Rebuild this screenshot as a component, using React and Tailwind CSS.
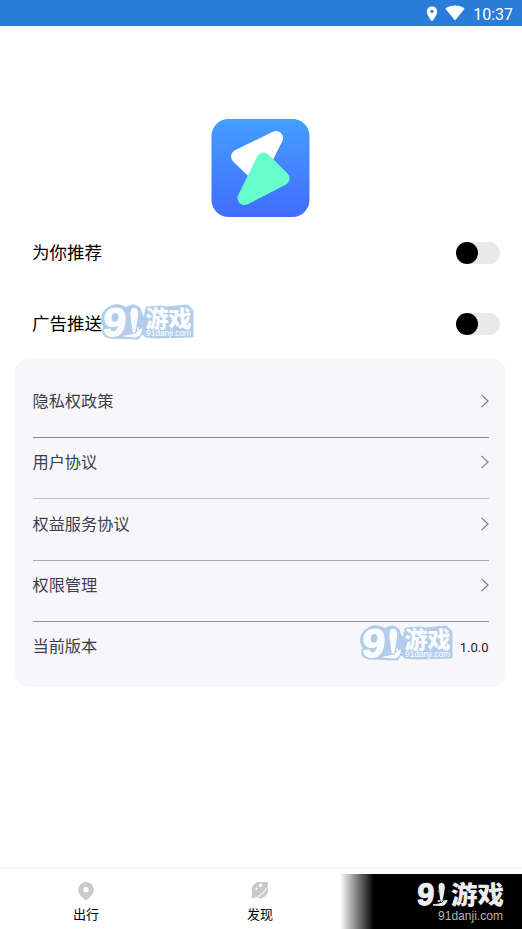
const switches = [
    { id: 'recommend', label: '为你推荐' },
    { id: 'ads', label: '广告推送', marked: true }
];

const links = [
    { label: '隐私权政策', line: 'border-[#85868f]' },
    { label: '用户协议', line: 'border-[#c3c3c9]' },
    { label: '权益服务协议', line: 'border-[#a7a7ae]' },
    { label: '权限管理', line: 'border-[#8f8f98]' }
];

function StatusBar() {
    return (
        <div className="flex h-[26px] shrink-0 items-center justify-end bg-[#2b7bd9] pr-[9px] text-white">
            <svg width="12" height="16" viewBox="0 0 11 16" className="mr-[7px] mt-px">
                <path
                    fill="currentColor"
                    fillRule="evenodd"
                    d="M5.500.2a5.200 5.200 0 0 0-5.200 5.200c0 3.700 5.200 10.100 5.200 10.100s5.200-6.400 5.200-10.100A5.200 5.200 0 0 0 5.500.2zm0 3.600a1.600 1.600 0 1 1 0 3.200 1.600 1.600 0 0 1 0-3.200z"
                />
            </svg>
            <svg width="20" height="16" viewBox="0 0 20 16" className="mr-[8px]">
                <path fill="currentColor" d="M10 15.500L.4 3.700C3 1.600 6.300.5 10 .5s7 1.100 9.600 3.200z" />
            </svg>
            <span className="mt-[3px] font-[Roboto,sans-serif] text-base leading-6">10:37</span>
        </div>
    );
}

function AppLogo() {
    return (
        <svg width="99" height="98" viewBox="0 0 99 98">
            <defs>
                <linearGradient id="logoBg" x1="0" y1="0" x2="0" y2="1">
                    <stop offset="0" stopColor="#439fff" />
                    <stop offset="1" stopColor="#426cff" />
                </linearGradient>
            </defs>
            <rect x=".5" width="98" height="98" rx="17" fill="url(#logoBg)" />
            <path
                d="M27 37.500L65 19L48 53L43 53z"
                fill="#fff"
                stroke="#fff"
                strokeWidth="14"
                strokeLinejoin="round"
            />
            <path
                d="M52.500 40.500L71.500 59.500L33.500 79z"
                fill="#66ffcb"
                stroke="#66ffcb"
                strokeWidth="14"
                strokeLinejoin="round"
            />
        </svg>
    );
}

// Sticker version of the site mark, white on a pale blue outline
function SiteSticker({ className }) {
    return (
        <svg width="97" height="38" viewBox="0 0 97 38" overflow="visible" className={className}>
            <path
                d="M15 3Q22 2 27 6Q35 0 40 6L43 14L46 14L48 5L62 4L68 5L88 3L93 8L93 33L58 34L47 33L43 29L39 35L11 34Q2 32 6 24Q-2 10 15 3z"
                fill="#b2cdea"
                stroke="#b2cdea"
                strokeWidth="3"
                strokeLinejoin="round"
            />
            <g
                fill="#fafcff"
                stroke="#fafcff"
                strokeLinejoin="round"
                fontFamily="'Liberation Sans', 'Noto Sans CJK SC', sans-serif"
                fontWeight="bold"
            >
                <text transform="translate(3 33) skewX(-5)" fontSize="40" strokeWidth="1.200" textLength="23" lengthAdjust="spacingAndGlyphs">9</text>
                <path d="M25 33Q34 33 42.500 26Q42 34 35 34z" strokeWidth="1.200" />
                <text x="31" y="27" fontSize="26" stroke="none" textLength="9" lengthAdjust="spacingAndGlyphs">1</text>
                <path d="M35 4Q41 4 39.500 14L37 29Q35 32 33 29L31 14Q30 4 35 4z" stroke="#b2cdea" strokeWidth="1.300" />
                <text x="46.500" y="24" fontSize="23" fontWeight="900" stroke="none" textLength="46" lengthAdjust="spacingAndGlyphs">游戏</text>
                <text x="47" y="33" fontSize="9.500" fontWeight="normal" strokeWidth=".1" textLength="45" lengthAdjust="spacingAndGlyphs">91danji.com</text>
            </g>
        </svg>
    );
}

function Switch() {
    return (
        <button type="button" role="switch" aria-checked="false" className="h-[22px] w-11 rounded-full bg-[#e9e9e9]">
            <span className="block size-[22px] rounded-full bg-black" />
        </button>
    );
}

function Chevron() {
    return (
        <svg width="8" height="14" viewBox="0 0 8 14" fill="none" stroke="#7b7c92" strokeWidth="1.200">
            <path d="M.6.9L7 7L.6 13.100" />
        </svg>
    );
}

function BottomNav() {
    return (
        <nav className="relative flex h-[62px] shrink-0 border-t-2 border-[#f7f7f7] bg-white">
            <div className="flex w-[172px] flex-col items-center pt-[13px]">
                <svg width="16" height="19" viewBox="0 0 16 19">
                    <path
                        fill="#c9c9c9"
                        fillRule="evenodd"
                        d="M8 0a7.700 7.700 0 0 0-7.700 7.700c0 3 1.700 5.300 3.700 7.200l4 3.700 4-3.700c2-1.900 3.700-4.200 3.700-7.200A7.700 7.700 0 0 0 8 0zm0 5a2.700 2.700 0 1 1 0 5.400A2.700 2.700 0 0 1 8 5z"
                    />
                </svg>
                <span className="mt-[4px] text-[13px] leading-5">出行</span>
            </div>
            <div className="flex w-[176px] flex-col items-center pt-[12px]">
                <svg width="18" height="18" viewBox="0 0 18 18">
                    <circle cx="9" cy="9" r="8.300" fill="#c9c9c9" />
                    <path d="M11 1.500Q17 .3 17.200 1.500Q17.500 3 16 7zM1.500 11Q.3 16 1 17Q2.500 17.600 5 16z" fill="#c9c9c9" />
                    <path d="M5 17Q12.500 13 17.300 5.500" fill="none" stroke="#fff" strokeWidth="1" />
                    <circle cx="9.500" cy="4.200" r="1.700" fill="#fff" />
                    <circle cx="5.500" cy="7.500" r="1" fill="#fff" />
                </svg>
                <span className="mt-[6px] text-[13px] leading-5">发现</span>
            </div>
            {/* Site mark over the last tab */}
            <div className="absolute bottom-0 right-0 h-[55px] w-[182px] bg-linear-to-r from-transparent to-black to-[34px]">
                <svg width="182" height="55" viewBox="0 0 182 55">
                    <g fill="#ededed" fontFamily="'Liberation Sans', 'Noto Sans CJK SC', sans-serif" fontWeight="bold">
                        <text transform="translate(76.500 31) skewX(-4)" fontSize="31" stroke="#ededed" strokeWidth="1.200" textLength="17" lengthAdjust="spacingAndGlyphs">9</text>
                        <path d="M93 31Q100 31 107 26Q106 31.500 101 31.500z" stroke="#ededed" strokeLinejoin="round" />
                        <text x="97" y="28" fontSize="20" textLength="8" lengthAdjust="spacingAndGlyphs">1</text>
                        <path d="M101.500 8.500Q106 8.500 105 16L103 27Q101.500 30 100 27L98.500 16Q97 8.500 101.500 8.500z" stroke="#000" strokeWidth=".8" />
                        <text x="111" y="30" fontSize="25" fontWeight="900" textLength="53" lengthAdjust="spacingAndGlyphs">游戏</text>
                        <text x="98" y="46" fontSize="12" fontWeight="normal" fill="#b5b5b5" textLength="65" lengthAdjust="spacingAndGlyphs">91danji.com</text>
                    </g>
                </svg>
            </div>
        </nav>
    );
}

export default function App() {
    return (
        <div className="flex h-screen flex-col bg-white font-[Roboto,'Noto_Sans_CJK_SC',sans-serif] text-black">
            <StatusBar />

            <main className="flex-1">
                <div className="flex justify-center pr-[2px] pt-[93px]">
                    <AppLogo />
                </div>

                {/* Switches */}
                <div className="pl-8 pr-[22px]">
                    {switches.map((item) => (
                        <div key={item.id} className="relative flex h-[71px] items-center justify-between">
                            <span className="pt-px text-[17.500px] leading-6">{item.label}</span>
                            <Switch />
                            {item.marked && <SiteSticker className="absolute left-[67px] top-[15px]" />}
                        </div>
                    ))}
                </div>

                {/* Policies and version */}
                <div className="ml-[15px] mr-4 h-[328px] rounded-[14px] bg-[#f7f7fa] px-[17.500px] pt-[17.600px] text-[#3b3d52]">
                    {links.map((item) => (
                        <a key={item.label} className={`flex h-[61.400px] justify-between border-b pt-[13.400px] ${item.line}`}>
                            <span className="text-[16.200px] leading-6">{item.label}</span>
                            <span className="-mt-px flex h-6 items-center">
                                <Chevron />
                            </span>
                        </a>
                    ))}
                    <div className="relative flex items-center justify-between pt-[12.800px]">
                        <span className="text-[16.200px] leading-6">当前版本</span>
                        <span className="mt-0.5 text-[13px] leading-5 text-[#222]">1.0.0</span>
                        <SiteSticker className="absolute right-[34px] top-[2px]" />
                    </div>
                </div>
            </main>

            <BottomNav />
        </div>
    );
}
